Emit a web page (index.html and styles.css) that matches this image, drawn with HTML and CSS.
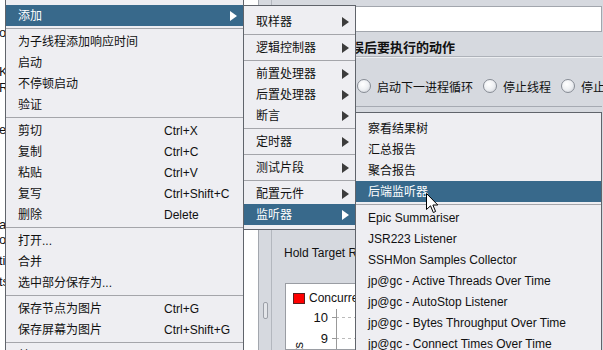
FILE: index.html
```html
<!DOCTYPE html>
<html lang="zh-CN">

<head>
  <meta charset="UTF-8">
  <title>JMeter - 添加监听器</title>
  <link rel="stylesheet" href="styles.css">
</head>

<body>

  <div class="app">
    <div class="tree">
      <div class="tree-row r1">o</div>
      <div class="tree-row r2">K</div>
      <div class="tree-row r3">R</div>
      <div class="tree-row r4">e</div>
      <div class="tree-row r5">a</div>
      <div class="tree-row r6">or</div>
      <div class="tree-row r7">ti</div>
      <div class="tree-row r7">ts</div>
    </div>
    <div class="splitter"><div class="grip"></div></div>

    <div class="editor">
      <div class="comment"></div>

      <div class="error-panel">
        <div class="panel-title">在取样器错误后要执行的动作</div>
        <div class="radio-row">
          <span class="radio"></span><span class="radio-label">继续</span>
          <span class="radio"></span><span class="radio-label">启动下一进程循环</span>
          <span class="radio"></span><span class="radio-label">停止线程</span>
          <span class="radio"></span><span class="radio-label">停止测试</span>
          <span class="radio"></span><span class="radio-label">立即停止测试</span>
        </div>
      </div>

      <div class="props">
        <div class="hold-row">Hold Target Rate Time (min)</div>
        <div class="chart">
          <div class="legend"><span class="swatch"></span>Concurrency</div>
          <svg class="plot" width="320" height="60">
            <line x1="46" y1="12.5" x2="50" y2="12.5" stroke="#999" />
            <line x1="46" y1="33.5" x2="50" y2="33.5" stroke="#999" />
            <line x1="50" y1="12.5" x2="320" y2="12.5" stroke="#bbb" stroke-dasharray="3,3" />
            <line x1="50" y1="33.5" x2="320" y2="33.5" stroke="#bbb" stroke-dasharray="3,3" />
            <line x1="50.5" y1="4" x2="50.5" y2="60" stroke="#999" />
            <text x="42" y="17" text-anchor="end">10</text>
            <text x="42" y="38" text-anchor="end">9</text>
            <text transform="translate(17,37) rotate(-90)" text-anchor="end">Concurrent Requests</text>
          </svg>
        </div>
      </div>
    </div>
  </div>

  <!-- 右键菜单 -->
  <div class="menu menu-main">
    <div class="item active"><span class="label">添加</span><span class="arrow"></span></div>
    <div class="sep"></div>
    <div class="item"><span class="label">为子线程添加响应时间</span></div>
    <div class="item"><span class="label">启动</span></div>
    <div class="item"><span class="label">不停顿启动</span></div>
    <div class="item"><span class="label">验证</span></div>
    <div class="sep"></div>
    <div class="item"><span class="label">剪切</span><span class="key">Ctrl+X</span></div>
    <div class="item"><span class="label">复制</span><span class="key">Ctrl+C</span></div>
    <div class="item"><span class="label">粘贴</span><span class="key">Ctrl+V</span></div>
    <div class="item"><span class="label">复写</span><span class="key">Ctrl+Shift+C</span></div>
    <div class="item"><span class="label">删除</span><span class="key">Delete</span></div>
    <div class="sep"></div>
    <div class="item"><span class="label">打开...</span></div>
    <div class="item"><span class="label">合并</span></div>
    <div class="item"><span class="label">选中部分保存为...</span></div>
    <div class="sep"></div>
    <div class="item"><span class="label">保存节点为图片</span><span class="key">Ctrl+G</span></div>
    <div class="item"><span class="label">保存屏幕为图片</span><span class="key">Ctrl+Shift+G</span></div>
    <div class="sep"></div>
    <div class="item"><span class="label">禁用</span></div>
  </div>

  <div class="menu menu-add">
    <div class="item"><span class="label">取样器</span><span class="arrow"></span></div>
    <div class="sep"></div>
    <div class="item"><span class="label">逻辑控制器</span><span class="arrow"></span></div>
    <div class="sep"></div>
    <div class="item"><span class="label">前置处理器</span><span class="arrow"></span></div>
    <div class="item"><span class="label">后置处理器</span><span class="arrow"></span></div>
    <div class="item"><span class="label">断言</span><span class="arrow"></span></div>
    <div class="sep"></div>
    <div class="item"><span class="label">定时器</span><span class="arrow"></span></div>
    <div class="sep"></div>
    <div class="item"><span class="label">测试片段</span><span class="arrow"></span></div>
    <div class="sep"></div>
    <div class="item"><span class="label">配置元件</span><span class="arrow"></span></div>
    <div class="item active"><span class="label">监听器</span><span class="arrow"></span></div>
  </div>

  <div class="menu menu-listener">
    <div class="item"><span class="label">察看结果树</span></div>
    <div class="item"><span class="label">汇总报告</span></div>
    <div class="item"><span class="label">聚合报告</span></div>
    <div class="item active"><span class="label">后端监听器</span></div>
    <div class="sep"></div>
    <div class="item"><span class="label">Epic Summariser</span></div>
    <div class="item"><span class="label">JSR223 Listener</span></div>
    <div class="item"><span class="label">SSHMon Samples Collector</span></div>
    <div class="item"><span class="label">jp@gc - Active Threads Over Time</span></div>
    <div class="item"><span class="label">jp@gc - AutoStop Listener</span></div>
    <div class="item"><span class="label">jp@gc - Bytes Throughput Over Time</span></div>
    <div class="item"><span class="label">jp@gc - Connect Times Over Time</span></div>
    <div class="item"><span class="label">jp@gc - Composite Graph</span></div>
  </div>

  <svg class="cursor" width="13" height="21" viewBox="0 0 13 21">
    <path d="M0.5 0.5 L0.5 16.5 L4.5 12.8 L7.3 19.5 L9.6 18.5 L6.9 12 L11.8 12 Z" fill="#fff" stroke="#000" />
  </svg>

</body>

</html>
```

FILE: styles.css
```css
* {
  box-sizing: border-box;
}

body {
  margin: 0;
  width: 603px;
  height: 350px;
  overflow: hidden;
  position: relative;
  font-family: "Liberation Sans", "Noto Sans CJK SC", sans-serif;
  font-size: 12px;
  color: #111;
  background-color: #d6d9df;
}

.app {
  display: flex;
  height: 350px;
  overflow: hidden;
}

/* 左侧的树 */
.tree {
  flex: none;
  width: 258px;
  background-color: #fff;
  display: flex;
  flex-direction: column;
  padding-top: 25px;
  line-height: 16px;
  font-size: 13px;
  overflow: hidden;
}

.tree-row {
  flex: none;
  height: 16px;
  margin-left: -1px;
}

.r2 { margin-top: 23px; }
.r4 { margin-top: 26px; }
.r5 { margin-top: 79px; }
.r6 { margin-top: -1px; }
.r7 { margin-top: 5px; }

.splitter {
  flex: none;
  width: 14px;
  border-left: 1px solid #a3a7ae;
  border-right: 1px solid #b3b7be;
  background-color: #d6d9df;
  display: flex;
  justify-content: center;
}

.grip {
  margin-top: 302px;
  width: 5px;
  height: 17px;
  border: 1px solid #9ca0a8;
  border-radius: 2px;
  background-color: #e4e6ea;
}

/* 右侧编辑区 */
.editor {
  flex: 1;
  min-width: 0;
  overflow: hidden;
  display: flex;
  flex-direction: column;
  padding-right: 1px;
  background-color: #d6d9df;
}

.comment {
  flex: none;
  margin: 6px 0 0 60px;
  height: 26px;
  background-color: #fff;
  border: 1px solid #a2a6ad;
}

.error-panel {
  flex: none;
  height: 75px;
  border-bottom: 1px solid #a6aab2;
}

.panel-title {
  height: 25px;
  padding: 8px 0 0 14px;
  font-size: 13px;
  font-weight: bold;
  line-height: 16px;
  white-space: nowrap;
  border-bottom: 1px solid #aeb2b9;
  box-shadow: 0 1px 0 #eceef1;
}

.radio-row {
  height: 49px;
  padding: 9px 0 0 31px;
  display: flex;
  align-items: center;
  white-space: nowrap;
}

.radio {
  width: 14px;
  height: 14px;
  border-radius: 50%;
  border: 1px solid #878c95;
  background: radial-gradient(circle at 40% 35%, #ffffff 0%, #eef0f3 50%, #c9cdd4 100%);
  margin-right: 6px;
  flex: none;
}

.radio-label {
  flex: none;
  margin-right: 10px;
}

.props {
  flex: 1;
  min-height: 0;
  display: flex;
  flex-direction: column;
  padding-left: 12px;
}

.hold-row {
  flex: none;
  margin-top: 136px;
  height: 20px;
  line-height: 20px;
  font-size: 12px;
  white-space: nowrap;
}

.chart {
  flex: 1;
  min-height: 0;
  overflow: hidden;
  margin: 20px 0 0 1px;
  background-color: #fff;
  border: 1px solid #9a9da3;
  padding: 7px 0 0 7px;
}

.legend {
  height: 14px;
  display: flex;
  align-items: center;
  font-size: 12px;
  white-space: nowrap;
}

.swatch {
  width: 12px;
  height: 11px;
  background-color: #ff0000;
  border: 1px solid #5a2020;
  margin-right: 4px;
}

.plot {
  display: block;
  margin: 0 0 0 -7px;
  font-family: "Liberation Sans", sans-serif;
  font-size: 13px;
  fill: #111;
}

/* 弹出菜单 */
.menu {
  position: absolute;
  background-color: #eeeef2;
  border: 1px solid #60646b;
  padding: 5px 0 4px;
}

.menu-main {
  left: 5px;
  top: -1px;
  width: 239px;
}

.menu-add {
  left: 243px;
  top: 5px;
  width: 113px;
}

.menu-listener {
  left: 355px;
  top: 112px;
  width: 247px;
}

.item {
  height: 21px;
  display: flex;
  align-items: center;
  padding: 0 6px 0 12px;
  line-height: 14px;
  white-space: nowrap;
}

.menu-main .label {
  width: 146px;
}

.key {
  color: #111;
}

.arrow {
  margin-left: auto;
  width: 0;
  height: 0;
  border-left: 7px solid #3c3c3c;
  border-top: 5px solid transparent;
  border-bottom: 5px solid transparent;
}

.item.active {
  background-color: #38698b;
  color: #fff;
}

.item.active .arrow {
  border-left-color: #fff;
}

.sep {
  height: 5px;
  padding-top: 2px;
}

.sep::before {
  content: "";
  display: block;
  height: 1px;
  background-color: #a4a5aa;
}

.cursor {
  position: absolute;
  left: 426px;
  top: 193px;
}
```
